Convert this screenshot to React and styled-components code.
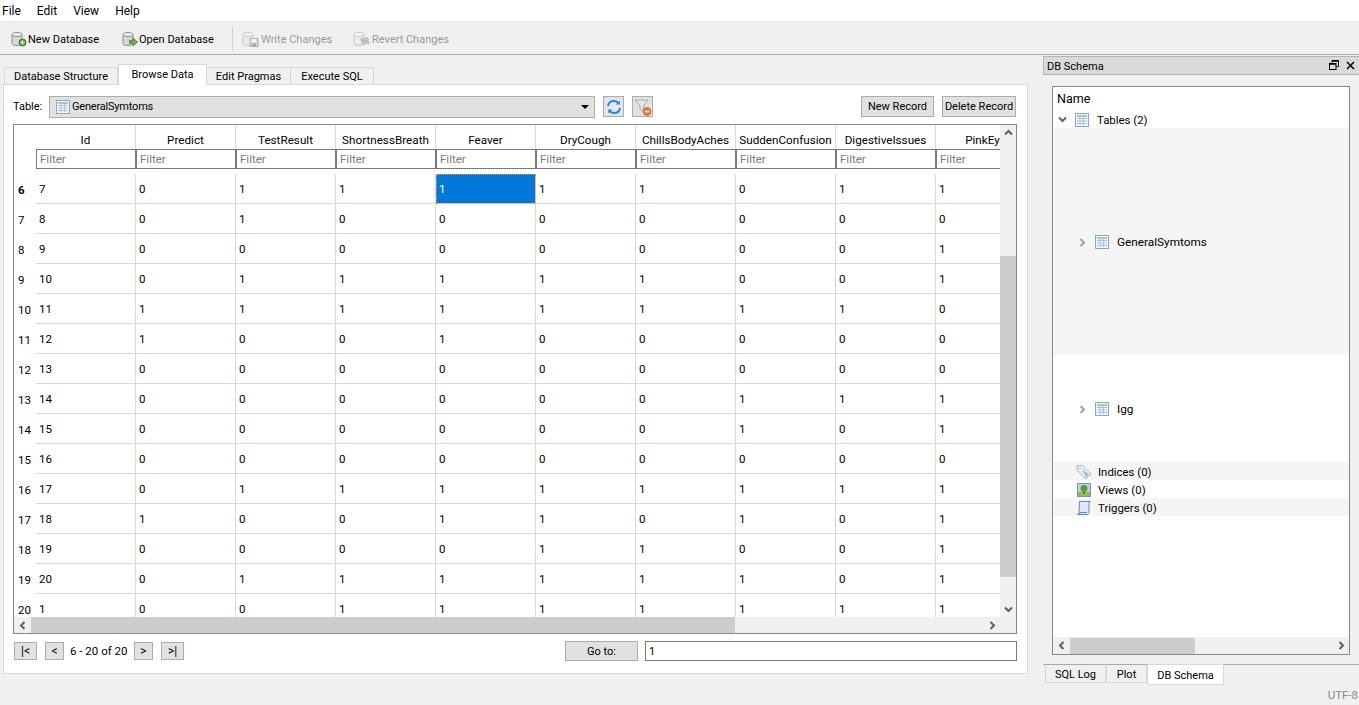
import React from "react";
import styled, { createGlobalStyle } from "styled-components";

const Global = createGlobalStyle`
  html, body { margin: 0; padding: 0; background: #f0f0f0; }
  * { box-sizing: border-box; }
  body { font-family: Roboto, "Liberation Sans", sans-serif; font-size: 11px; color: #000; overflow: hidden; white-space: nowrap; }
`;

const Page = styled.div`
  width: 1359px; height: 705px; display: flex; flex-direction: column; background: #f0f0f0; overflow: hidden;
`;
const MenuBar = styled.div`
  height: 22px; background: #fff; display: flex; gap: 16px; padding: 0 0 0 2px; align-items: center; flex: none; font-size: 12px;
  border-bottom: 1px solid #e9e9e9;
`;
const MenuItem = styled.span``;
const Toolbar = styled.div`
  height: 33px; flex: none; display: flex; align-items: center; padding: 2px 0 0 11px; border-bottom: 1px solid #a9a9a9;
`;
const ToolButton = styled.div`
  display: flex; align-items: center; gap: 1px; width: ${p => p.$w}px; flex: none; color: ${p => (p.$off ? "#9a9a9a" : "#000")};
`;
const ToolSep = styled.div`
  width: 1px; height: 24px; background: #d0d0d0; margin-right: 9px; flex: none;
`;
const Main = styled.div`
  flex: 1; display: flex; min-height: 0;
`;
const LeftCol = styled.div`
  width: 1043px; flex: none; padding: 9px 0 0 3px; display: flex; flex-direction: column;
`;
const TabBar = styled.div`
  height: 21px; display: flex; align-items: flex-end; padding-left: 1px; position: relative; z-index: 1; flex: none;
`;
const Tab = styled.div`
  width: ${p => p.$w}px; height: ${p => (p.$on ? 21 : 18)}px; background: ${p => (p.$on ? "#fff" : "#f0f0f0")};
  border: 1px solid #d9d9d9; border-bottom: ${p => (p.$on ? "none" : "1px solid #d9d9d9")}; border-left-width: ${p => (p.$first || p.$on ? 1 : 0)}px;
  display: flex; align-items: center; justify-content: center; padding-bottom: ${p => (p.$on ? 1 : 0)}px;
`;
const Panel = styled.div`
  width: 1025px; height: 590px; margin-top: -1px; background: #fff; border: 1px solid #d9d9d9; padding: 10px 11px 0 9px; flex: none;
  display: flex; flex-direction: column;
`;
const TableBar = styled.div`
  height: 23px; display: flex; align-items: center; flex: none; margin-bottom: 6px;
`;
const TableLabel = styled.span`
  width: 36px; flex: none;
`;
const Combo = styled.div`
  width: 546px; height: 22px; flex: none; background: #e1e1e1; border: 1px solid #adadad; display: flex; align-items: center; padding: 0 5px 0 5px; gap: 1px;
`;
const ComboText = styled.span`
  flex: 1; letter-spacing: -0.2px;
`;
const Caret = styled.div`
  width: 0; height: 0; border-left: 4px solid transparent; border-right: 4px solid transparent; border-top: 4px solid #000;
`;
const IconBtn = styled.div`
  width: 21px; height: 21px; flex: none; margin-left: ${p => p.$ml}px; background: #e1e1e1; border: 1px solid #adadad; display: flex; align-items: center; justify-content: center;
`;
const Spacer = styled.div`
  flex: 1;
`;
const PushBtn = styled.div`
  width: ${p => p.$w}px; height: ${p => p.$h || 21}px; flex: none; margin-left: ${p => p.$ml || 0}px; background: #e1e1e1; border: 1px solid #adadad;
  display: flex; align-items: center; justify-content: center;
`;
const DataFrame = styled.div`
  width: 1004px; height: 510px; flex: none; border: 1px solid #828790; display: grid; grid-template-columns: 986px 16px; grid-template-rows: 492px 16px;
`;
const Viewport = styled.div`
  overflow: hidden; display: flex; flex-direction: column; background: #fff;
`;
const HeadRow = styled.div`
  display: flex; height: 24px; flex: none;
`;
const Corner = styled.div`
  width: 22px; flex: none;
`;
const HeadCell = styled.div`
  width: 100px; flex: none; display: flex; align-items: center; justify-content: center; overflow: hidden; border-right: 1px solid #d9d9d9; padding-top: 5px;
  font-size: 11.7px;
`;
const FilterRow = styled.div`
  display: flex; height: 20px; flex: none; margin-bottom: 5px;
`;
const FilterCell = styled.div`
  width: 100px; flex: none; border: 1px solid #7a7a7a; color: #7b7b7b; padding-left: 3px; display: flex; align-items: center; font-size: 11.5px;
`;
const DataRow = styled.div`
  display: flex; height: 30px; flex: none;
`;
const RowLabel = styled.div`
  width: 22px; flex: none; padding: 2px 0 0 4px; display: flex; align-items: center; font-size: 11.5px; font-weight: ${p => (p.$bold ? 700 : 400)};
`;
const Cell = styled.div`
  width: 100px; flex: none; padding-left: 3px; display: flex; align-items: center; border-right: 1px solid #d9d9d9; border-bottom: 1px solid #d9d9d9;
  background: ${p => (p.$sel ? "#0078d7" : "#fff")}; color: ${p => (p.$sel ? "#fff" : "#000")}; font-size: 11.5px;
  outline: ${p => (p.$sel ? "1px dotted #ff9a3c" : "none")}; outline-offset: -1px;
`;
const VScroll = styled.div`
  background: #f0f0f0; display: flex; flex-direction: column; align-items: center; position: relative; justify-content: space-between; padding: 3px 0;
`;
const VThumb = styled.div`
  position: absolute; left: 0; right: 0; top: 131px; height: 321px; background: #cdcdcd;
`;
const HScroll = styled.div`
  background: #f0f0f0; display: flex; align-items: center; height: 16px;
`;
const HArrowBox = styled.div`
  width: ${p => p.$w || 17}px; height: 16px; flex: none; display: flex; align-items: center; justify-content: center;
`;
const HTrack = styled.div`
  flex: 1; height: 16px;
`;
const HThumb = styled.div`
  width: ${p => p.$w}px; height: 16px; background: #cdcdcd;
`;
const ScrollCorner = styled.div`
  background: #f0f0f0;
`;
const NavBar = styled.div`
  display: flex; align-items: center; height: 20px; margin-top: 7px; flex: none;
`;
const NavBtn = styled.div`
  width: ${p => p.$w}px; height: 18px; flex: none; margin-left: ${p => p.$ml || 0}px; background: #e1e1e1; border: 1px solid #adadad; display: flex; align-items: center; justify-content: center; margin-top: 0; font-size: 12px;
`;
const NavText = styled.span`
  margin-left: 6px; width: 64px; flex: none; font-size: 11.5px;
`;
const GotoInput = styled.div`
  width: 372px; height: 20px; flex: none; margin-left: 7px; margin-right: -1px; border: 1px solid #7a7a7a; display: flex; align-items: center; padding-left: 3px;
`;
const RightCol = styled.div`
  flex: 1; display: flex; flex-direction: column; min-width: 0;
`;
const DockTitle = styled.div`
  height: 19px; margin-top: 1px; background: #dadada; border: 1px solid #b5b5b5; border-right: none; display: flex; align-items: center; padding: 1px 4px 0 3px; flex: none;
`;
const DockText = styled.span`
  flex: 1;
`;
const DockIcons = styled.div`
  display: flex; gap: 7px; align-items: center; margin-top: -2px;
`;
const TreeFrame = styled.div`
  width: 298px; height: 569px; margin: 11px 0 0 9px; background: #fff; border: 1px solid #828790; display: flex; flex-direction: column; flex: none;
`;
const TreeHead = styled.div`
  height: 23px; padding: 0 0 1px 4px; display: flex; align-items: center; flex: none; font-size: 12.5px;
`;
const TreeRow = styled.div`
  height: ${p => p.$h}px; flex: none; background: ${p => (p.$alt ? "#f5f5f5" : "#fff")}; display: flex; align-items: center; padding-left: ${p => p.$pl}px; gap: ${p => p.$gap ?? 6}px; padding-top: 1px;
  font-size: ${p => p.$fs || 11.4}px;
`;
const TreeFill = styled.div`
  flex: 1;
`;
const TreeScroll = styled.div`
  height: 17px; background: #f0f0f0; display: flex; align-items: center; flex: none;
`;
const BottomTabs = styled.div`
  display: flex; align-items: flex-start; margin-top: 9px; border-top: 1px solid #a9a9a9; padding-left: 2px; flex: 1; position: relative;
`;
const DockTab = styled.div`
  width: ${p => p.$w}px; height: ${p => (p.$on ? 21 : 19)}px; margin-top: -1px; padding-top: 1px; background: ${p => (p.$on ? "#fff" : "#f0f0f0")}; border: 1px solid #d9d9d9; border-top: ${p => (p.$on ? "1px solid #d9d9d9" : "1px solid #a9a9a9")}; display: flex; align-items: center; justify-content: center;
`;
const Status = styled.div`
  position: absolute; right: 1px; bottom: 3px; color: #8a8a8a; font-size: 11.5px;
`;

const TableIcon = ({ s = 16 }) => (
  <svg width={s} height={s} viewBox="0 0 16 16">
    <rect x="1.5" y="1.5" width="13" height="13" fill="#f4f8fd" stroke="#7fa7d9" />
    <rect x="3" y="3" width="10" height="2" fill="#a8cf8e" />
    <path d="M3 6.5h10M3 9h10M3 11.5h10M6 5v8M9.5 5v8" stroke="#a9c3e6" strokeWidth="1" fill="none" />
  </svg>
);

const Db = ({ off }) => (
  <>
    <path d="M1 3.500v9c0 1.200 2.300 2 5 2s5-.8 5-2v-9z" fill={off ? "#ececec" : "#d6d6d6"} stroke={off ? "#c8c8c8" : "#8f8f8f"} />
    <ellipse cx="6" cy="3.500" rx="5" ry="2" fill={off ? "#f6f6f6" : "#f2f2f2"} stroke={off ? "#c8c8c8" : "#8f8f8f"} />
  </>
);
const NewDbIcon = () => (
  <svg width="16" height="16" viewBox="0 0 16 16">
    <Db />
    <circle cx="11.500" cy="11.500" r="3.500" fill="#57a63a" stroke="#3d7f28" />
    <path d="M11.500 9.500v4M9.500 11.500h4" stroke="#fff" strokeWidth="1.200" />
  </svg>
);
const OpenDbIcon = () => (
  <svg width="16" height="16" viewBox="0 0 16 16">
    <Db />
    <path d="M7.500 9.500h3.500V7l4.500 4-4.500 4v-2.500H7.500z" fill="#72b043" stroke="#467f26" strokeWidth=".8" />
  </svg>
);
const WriteIcon = () => (
  <svg width="18" height="16" viewBox="0 0 18 16">
    <Db off />
    <rect x="8" y="7.500" width="8" height="8" fill="#d8d8d8" stroke="#b0b0b0" />
    <rect x="10" y="8" width="4" height="3" fill="#f5f5f5" />
    <rect x="10" y="12.500" width="4" height="3" fill="#a8a8a8" />
  </svg>
);
const RevertIcon = () => (
  <svg width="18" height="16" viewBox="0 0 18 16">
    <Db off />
    <path d="M8 7.500h5V6l3 2.500-3 2.500V9.500H8zM16 12.500h-5V14l-3-2.500L11 9v1.500h5z" fill="#c8c8c8" stroke="#aaa" strokeWidth=".6" />
  </svg>
);
const RefreshIcon = () => (
  <svg width="18" height="18" viewBox="0 0 18 18" fill="none">
    <rect x="1" y="1" width="16" height="16" fill="#dfe8f3" />
    <path d="M3 8c.5-3 3-5 6-5 2 0 3.300.8 4.500 2" stroke="#3b7fc4" strokeWidth="2" />
    <path d="M14.800 2.500v4h-4z" fill="#3b7fc4" />
    <path d="M15 10c-.5 3-3 5-6 5-2 0-3.300-.8-4.500-2" stroke="#3b7fc4" strokeWidth="2" />
    <path d="M3.200 15.500v-4h4z" fill="#3b7fc4" />
  </svg>
);
const FilterOffIcon = () => (
  <svg width="18" height="18" viewBox="0 0 18 18">
    <path d="M1 2h13L9.500 8v6L6 11.500V8z" fill="#e6e6e6" stroke="#a8a8a8" />
    <circle cx="13" cy="13.500" r="4" fill="#e8763a" stroke="#c85a20" strokeWidth=".6" />
    <rect x="10.800" y="12.700" width="4.400" height="1.600" fill="#fff" />
  </svg>
);
const Chevron = ({ dir, color = "#606060", size = 9, sw = 2 }) => {
  const d = {
    up: "M1 6.500 4.500 3 8 6.500",
    down: "M1 2.500 4.500 6 8 2.500",
    left: "M6.500 1 3 4.500 6.500 8",
    right: "M2.500 1 6 4.500 2.500 8",
  }[dir];
  return (
    <svg width={size} height={size} viewBox="0 0 9 9">
      <path d={d} fill="none" stroke={color} strokeWidth={sw} />
    </svg>
  );
};
const TagIcon = () => (
  <svg width="16" height="16" viewBox="0 0 16 16">
    <path d="M1 1.500h5.500L15 10l-5 5L1 6.500z" fill="#e9eef3" stroke="#b9b9b9" />
    <path d="M6 5l7 5.500-3 3z" fill="#8fc1ee" />
    <circle cx="3.500" cy="4" r="1" fill="#fff" stroke="#aaa" strokeWidth=".5" />
  </svg>
);
const PicIcon = () => (
  <svg width="16" height="16" viewBox="0 0 16 16">
    <rect x="1.500" y="1.500" width="13" height="13" fill="#b8d4ea" stroke="#8a8f95" />
    <rect x="2" y="10" width="12" height="4" fill="#8cbb5e" />
    <circle cx="8" cy="6.500" r="3.500" fill="#5f9a3a" />
    <rect x="7" y="9" width="2" height="3" fill="#8a6a3c" />
  </svg>
);
const ScrollIcon = () => (
  <svg width="16" height="16" viewBox="0 0 16 16">
    <path d="M3.500 1.500h11c-1 0-1.500.8-1.500 2v9c0 1.200-.8 2-2 2H1.500c1 0 1.500-1 1.500-2z" fill="#dbe8f8" stroke="#5d8ac2" />
    <path d="M1.500 14.500c1.500 0 2.500-.5 2.500-2h7" fill="none" stroke="#5d8ac2" />
  </svg>
);
const RestoreIcon = () => (
  <svg width="10" height="10" viewBox="0 0 10 10" fill="none" stroke="#000">
    <path d="M3 2.500V.5h6.500v6H7.500" strokeWidth="1" />
    <path d="M3 1h6.500" strokeWidth="1.500" />
    <rect x=".5" y="3.500" width="6.500" height="6" strokeWidth="1" />
    <path d="M.5 4h6.500" strokeWidth="1.500" />
  </svg>
);
const CloseIcon = () => (
  <svg width="9" height="9" viewBox="0 0 9 9" stroke="#000" strokeWidth="1.500">
    <path d="M1 1l7 7M8 1L1 8" />
  </svg>
);

const columns = ["Id", "Predict", "TestResult", "ShortnessBreath", "Feaver", "DryCough", "ChillsBodyAches", "SuddenConfusion", "DigestiveIssues", "PinkEye"];
const rows = [
  [6, "7 0 1 1 1 1 1 0 1 1"],
  [7, "8 0 1 0 0 0 0 0 0 0"],
  [8, "9 0 0 0 0 0 0 0 0 1"],
  [9, "10 0 1 1 1 1 1 0 0 1"],
  [10, "11 1 1 1 1 1 1 1 1 0"],
  [11, "12 1 0 0 1 0 0 0 0 0"],
  [12, "13 0 0 0 0 0 0 0 0 0"],
  [13, "14 0 0 0 0 0 0 1 1 1"],
  [14, "15 0 0 0 0 0 0 1 0 1"],
  [15, "16 0 0 0 0 0 0 0 0 0"],
  [16, "17 0 1 1 1 1 1 1 1 1"],
  [17, "18 1 0 0 1 1 0 1 0 1"],
  [18, "19 0 0 0 0 1 1 0 0 1"],
  [19, "20 0 1 1 1 1 1 1 0 1"],
  [20, "1 0 0 1 1 1 1 1 1 1"],
];

export default function App() {
  return (
    <Page>
      <Global />
      <MenuBar>
        <MenuItem>File</MenuItem>
        <MenuItem>Edit</MenuItem>
        <MenuItem>View</MenuItem>
        <MenuItem>Help</MenuItem>
      </MenuBar>
      <Toolbar>
        <ToolButton $w={111}><NewDbIcon />New Database</ToolButton>
        <ToolButton $w={110}><OpenDbIcon />Open Database</ToolButton>
        <ToolSep />
        <ToolButton $w={111} $off><WriteIcon />Write Changes</ToolButton>
        <ToolButton $w={110} $off><RevertIcon />Revert Changes</ToolButton>
      </Toolbar>
      <Main>
        <LeftCol>
          <TabBar>
            <Tab $w={114} $first>Database Structure</Tab>
            <Tab $w={89} $on>Browse Data</Tab>
            <Tab $w={84}>Edit Pragmas</Tab>
            <Tab $w={83}>Execute SQL</Tab>
          </TabBar>
          <Panel>
            <TableBar>
              <TableLabel>Table:</TableLabel>
              <Combo>
                <TableIcon />
                <ComboText>GeneralSymtoms</ComboText>
                <Caret />
              </Combo>
              <IconBtn $ml={8}><RefreshIcon /></IconBtn>
              <IconBtn $ml={8}><FilterOffIcon /></IconBtn>
              <Spacer />
              <PushBtn $w={73}>New Record</PushBtn>
              <PushBtn $w={74} $ml={8}>Delete Record</PushBtn>
            </TableBar>
            <DataFrame>
              <Viewport>
                <HeadRow>
                  <Corner />
                  {columns.map(c => <HeadCell key={c}>{c}</HeadCell>)}
                </HeadRow>
                <FilterRow>
                  <Corner />
                  {columns.map(c => <FilterCell key={c}>Filter</FilterCell>)}
                </FilterRow>
                {rows.map(([label, vals]) => (
                  <DataRow key={label}>
                    <RowLabel $bold={label === 6}>{label}</RowLabel>
                    {vals.split(" ").map((v, i) => (
                      <Cell key={i} $sel={label === 6 && i === 4}>{v}</Cell>
                    ))}
                  </DataRow>
                ))}
              </Viewport>
              <VScroll>
                <Chevron dir="up" />
                <VThumb />
                <Chevron dir="down" />
              </VScroll>
              <HScroll>
                <HArrowBox><Chevron dir="left" /></HArrowBox>
                <HThumb $w={704} />
                <HTrack />
                <HArrowBox $w={16}><Chevron dir="right" /></HArrowBox>
              </HScroll>
              <ScrollCorner />
            </DataFrame>
            <NavBar>
              <NavBtn $w={23} $ml={1}>|&lt;</NavBtn>
              <NavBtn $w={19} $ml={8}>&lt;</NavBtn>
              <NavText>6 - 20 of 20</NavText>
              <NavBtn $w={19}>&gt;</NavBtn>
              <NavBtn $w={23} $ml={8}>&gt;|</NavBtn>
              <Spacer />
              <PushBtn $w={73} $h={20}>Go to:</PushBtn>
              <GotoInput>1</GotoInput>
            </NavBar>
          </Panel>
        </LeftCol>
        <RightCol>
          <DockTitle>
            <DockText>DB Schema</DockText>
            <DockIcons><RestoreIcon /><CloseIcon /></DockIcons>
          </DockTitle>
          <TreeFrame>
            <TreeHead>Name</TreeHead>
            <TreeRow $h={18} $pl={5} $gap={7}>
              <Chevron dir="down" size={9} />
              <TableIcon />
              <span>Tables (2)</span>
            </TreeRow>
            <TreeRow $h={227} $pl={25} $alt $gap={7} $fs={11.8}>
              <Chevron dir="right" color="#a0a0a0" />
              <TableIcon />
              <span>GeneralSymtoms</span>
            </TreeRow>
            <TreeRow $h={107} $pl={25} $gap={7} $fs={11.8}>
              <Chevron dir="right" color="#a0a0a0" />
              <TableIcon />
              <span>Igg</span>
            </TreeRow>
            <TreeRow $h={18} $pl={23} $alt><TagIcon /><span>Indices (0)</span></TreeRow>
            <TreeRow $h={18} $pl={23}><PicIcon /><span>Views (0)</span></TreeRow>
            <TreeRow $h={18} $pl={23} $alt><ScrollIcon /><span>Triggers (0)</span></TreeRow>
            <TreeFill />
            <TreeScroll>
              <HArrowBox $w={17}><Chevron dir="left" /></HArrowBox>
              <HThumb $w={125} />
              <HTrack />
              <HArrowBox $w={16}><Chevron dir="right" /></HArrowBox>
            </TreeScroll>
          </TreeFrame>
          <BottomTabs>
            <DockTab $w={61}>SQL Log</DockTab>
            <DockTab $w={41}>Plot</DockTab>
            <DockTab $w={77} $on>DB Schema</DockTab>
            <Status>UTF-8</Status>
          </BottomTabs>
        </RightCol>
      </Main>
    </Page>
  );
}
